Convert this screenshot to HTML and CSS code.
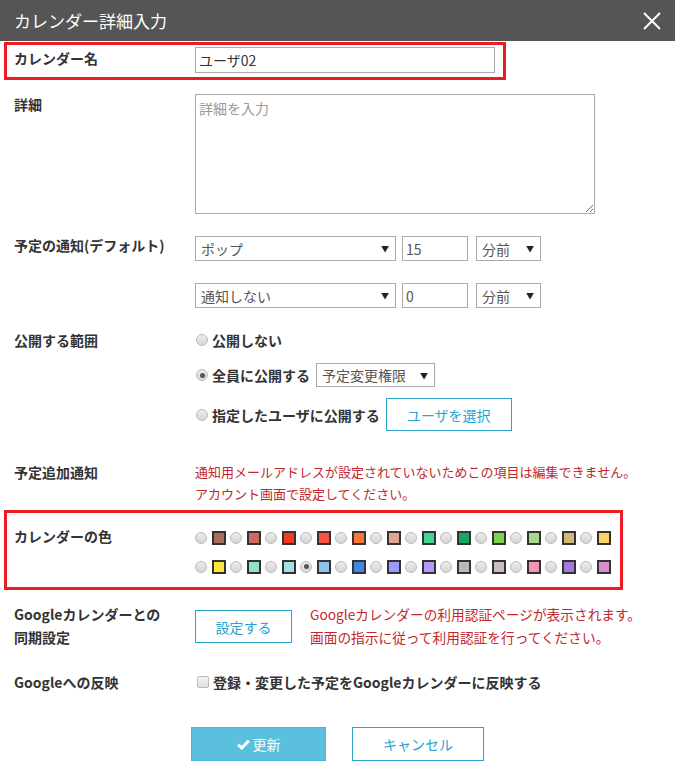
FILE: index.html
```html
<!DOCTYPE html>
<html lang="ja">
<head>
    <meta charset="UTF-8">
    <meta name="viewport" content="width=device-width, initial-scale=1.0">
    <title>カレンダー詳細入力</title>
    <link rel="stylesheet" href="styles.css">
</head>
<body>
    <div class="dialog-header">
        <div class="dialog-title">カレンダー詳細入力</div>
        <span class="close-icon">
            <svg width="18" height="18" viewBox="0 0 18 18"><path d="M1 1 L17 17 M17 1 L1 17" stroke="#fff" stroke-width="2" fill="none"/></svg>
        </span>
    </div>

    <div class="form">
        <div class="row row-hl row-name">
            <div class="label">カレンダー名</div>
            <div class="field"><input type="text" class="text-input name-input" value="ユーザ02"></div>
        </div>

        <div class="row row-detail">
            <div class="label">詳細</div>
            <div class="field"><textarea class="detail-box" placeholder="詳細を入力"></textarea></div>
        </div>

        <div class="row row-notify">
            <div class="label">予定の通知(デフォルト)</div>
            <div class="field">
                <div class="ctrl-line">
                    <div class="select sel-type"><span>ポップ</span><span class="caret">&#9660;</span></div>
                    <input type="text" class="text-input num-input" value="15">
                    <div class="select sel-unit"><span>分前</span><span class="caret">&#9660;</span></div>
                </div>
                <div class="ctrl-line">
                    <div class="select sel-type"><span>通知しない</span><span class="caret">&#9660;</span></div>
                    <input type="text" class="text-input num-input" value="0">
                    <div class="select sel-unit"><span>分前</span><span class="caret">&#9660;</span></div>
                </div>
            </div>
        </div>

        <div class="row row-public">
            <div class="label">公開する範囲</div>
            <div class="field">
                <div class="radio-line line-1">
                    <span class="radio"></span><span class="opt">公開しない</span>
                </div>
                <div class="radio-line line-2">
                    <span class="radio checked"></span><span class="opt">全員に公開する</span>
                    <div class="select sel-perm"><span>予定変更権限</span><span class="caret">&#9660;</span></div>
                </div>
                <div class="radio-line line-3">
                    <span class="radio"></span><span class="opt">指定したユーザに公開する</span>
                    <button class="btn-outline btn-user">ユーザを選択</button>
                </div>
            </div>
        </div>

        <div class="row row-mail">
            <div class="label">予定追加通知</div>
            <div class="field note">通知用メールアドレスが設定されていないためこの項目は編集できません。<br>アカウント画面で設定してください。</div>
        </div>

        <div class="row row-hl row-color">
            <div class="label">カレンダーの色</div>
            <div class="field">
                <div class="swatches" id="swatch-row-1"></div>
                <div class="swatches" id="swatch-row-2"></div>
            </div>
        </div>

        <div class="row row-google">
            <div class="label">Googleカレンダーとの<br>同期設定</div>
            <div class="field google-field">
                <button class="btn-outline btn-setting">設定する</button>
                <div class="note">Googleカレンダーの利用認証ページが表示されます。<br>画面の指示に従って利用認証を行ってください。</div>
            </div>
        </div>

        <div class="row row-reflect">
            <div class="label">Googleへの反映</div>
            <div class="field check-line">
                <span class="checkbox"></span><span class="opt">登録・変更した予定をGoogleカレンダーに反映する</span>
            </div>
        </div>

        <div class="actions">
            <button class="btn-primary">
                <svg width="13" height="11" viewBox="0 0 13 11"><path d="M1.2 5.6 L4.8 9 L11.8 1.8" stroke="#fff" stroke-width="3" fill="none"/></svg>
                更新
            </button>
            <button class="btn-outline btn-cancel">キャンセル</button>
        </div>
    </div>

    <script>
        var rowOne = ['#a86e5a', '#d0685e', '#f53822', '#fc5340', '#fd7531', '#e1a594',
                      '#41d593', '#14a762', '#7ed348', '#a8da8b', '#d1b874', '#fcd462'];
        var rowTwo = ['#fae63c', '#93e3c4', '#a0e0e7', '#88c4ef', '#4385e6', '#999bfe',
                      '#b59afd', '#b9b9b9', '#cabfc0', '#f794b3', '#a578e0', '#d78fcf'];

        function fillSwatches(id, colors, checkedIndex) {
            var row = document.getElementById(id);
            colors.forEach(function (color, i) {
                var item = document.createElement('span');
                item.className = 'swatch';
                var radio = document.createElement('span');
                radio.className = i === checkedIndex ? 'radio checked' : 'radio';
                var box = document.createElement('span');
                box.className = 'color-box';
                box.style.backgroundColor = color;
                item.appendChild(radio);
                item.appendChild(box);
                row.appendChild(item);
            });
        }

        fillSwatches('swatch-row-1', rowOne, -1);
        fillSwatches('swatch-row-2', rowTwo, 3);
    </script>
</body>
</html>
```

FILE: styles.css
```css
body {
    font-family: "Noto Sans CJK JP", "Noto Sans", sans-serif;
    font-size: 14px;
    color: #333;
    margin: 0;
    padding: 0;
    background-color: #fff;
}

.dialog-header {
    background-color: #555555;
    color: #fff;
    height: 41px;
    padding: 0 14px;
    display: flex;
    justify-content: space-between;
    align-items: center;
}

.dialog-title {
    font-size: 17px;
}

.close-icon {
    display: flex;
}

.row {
    display: flex;
    padding-left: 14px;
}

.label {
    width: 181px;
    flex-shrink: 0;
    font-weight: bold;
    line-height: 20px;
}

/* highlighted rows (red frame) */
.row-hl {
    margin-left: 4px;
    padding-left: 7px;
    border: 3px solid #ec1c24;
}

.row-name {
    margin-top: 1px;
    width: 502px;
    box-sizing: border-box;
    padding-top: 2px;
    padding-bottom: 4px;
}

.row-name .label {
    padding-top: 1px;
}

.text-input {
    font-family: inherit;
    font-size: 14px;
    color: #333;
    border: 1px solid #aaa;
    padding: 0 3px;
    box-sizing: border-box;
    outline: none;
}

.name-input {
    width: 300px;
    height: 26px;
}

.row-detail {
    margin-top: 14px;
}

.detail-box {
    display: block;
    width: 400px;
    height: 120px;
    box-sizing: border-box;
    border: 1px solid #aaa;
    padding: 3px 3px;
    font-family: inherit;
    font-size: 14px;
    line-height: 20px;
    color: #333;
}

.detail-box::placeholder {
    color: #999;
}

.row-notify {
    margin-top: 22px;
}

.row-notify .label {
    margin-top: -1px;
}

.ctrl-line {
    display: flex;
    height: 25px;
}

.ctrl-line + .ctrl-line {
    margin-top: 22px;
}

.select {
    display: flex;
    justify-content: space-between;
    align-items: center;
    box-sizing: border-box;
    border: 1px solid #aaa;
    padding: 0 6px 0 5px;
    color: #555;
    background: #fff;
}

.caret {
    font-size: 8px;
    color: #222;
}

.sel-type {
    width: 201px;
}

.num-input {
    width: 66px;
    height: 25px;
    margin-left: 6px;
    color: #555;
}

.sel-unit {
    width: 65px;
    margin-left: 8px;
}

.row-public {
    margin-top: 22px;
}

.radio-line {
    display: flex;
    align-items: center;
}

.line-1 {
    height: 20px;
}

.line-2 {
    height: 24px;
    margin-top: 13px;
}

.line-3 {
    height: 33px;
    margin-top: 11px;
}

.radio {
    display: inline-block;
    width: 12px;
    height: 12px;
    box-sizing: border-box;
    border-radius: 50%;
    border: 1px solid #bbb;
    background: linear-gradient(#ececec, #d6d6d6);
    position: relative;
    flex-shrink: 0;
}

.radio.checked::after {
    content: "";
    position: absolute;
    left: 2.5px;
    top: 2.5px;
    width: 5px;
    height: 5px;
    border-radius: 50%;
    background: #555;
}

.row-public .radio {
    margin-left: 1px;
    margin-right: 4px;
}

.opt {
    font-weight: bold;
}

.sel-perm {
    width: 119px;
    height: 24px;
    margin-left: 6px;
}

.btn-outline {
    font-family: inherit;
    font-size: 14px;
    color: #2a9fd0;
    background: #fff;
    border: 1px solid #2aa3cc;
    cursor: pointer;
    padding: 0;
}

.btn-user {
    width: 126px;
    height: 33px;
    margin-left: 6px;
}

.row-mail {
    margin-top: 30px;
}

.row-mail .label {
    line-height: 22px;
}

.note {
    color: #c1272d;
    font-size: 13px;
    line-height: 22px;
}

.row-color {
    margin-top: 5px;
    width: 619px;
    box-sizing: border-box;
    padding-top: 10px;
    padding-bottom: 6px;
}

.row-color .label {
    padding-top: 3px;
}

.swatches {
    display: flex;
    height: 29px;
    align-items: center;
}

.swatch {
    display: flex;
    align-items: center;
}

.swatch .radio {
    margin-right: 5px;
}

.color-box {
    display: inline-block;
    width: 14px;
    height: 14px;
    box-sizing: border-box;
    border: 2px solid #333;
    margin-right: 4px;
}

.row-google {
    margin-top: 13px;
}

.row-google .label {
    line-height: 23px;
}

.google-field {
    display: flex;
}

.btn-setting {
    width: 97px;
    height: 33px;
    margin-top: 7px;
    margin-right: 18px;
}

.row-google .note {
    font-size: 13.7px;
    line-height: 23px;
}

.row-reflect {
    margin-top: 23px;
}

.check-line {
    display: flex;
    align-items: center;
    height: 20px;
}

.checkbox {
    display: inline-block;
    width: 12px;
    height: 12px;
    box-sizing: border-box;
    border: 1px solid #bbb;
    border-radius: 2px;
    background: linear-gradient(#f4f4f4, #dedede);
    margin-left: 2px;
    margin-right: 4px;
}

.actions {
    display: flex;
    justify-content: center;
    gap: 26px;
    margin-top: 35px;
}

.btn-primary {
    width: 135px;
    height: 34px;
    font-family: inherit;
    font-size: 14px;
    color: #fff;
    background-color: #5bc0de;
    border: 1px solid #46b8da;
    display: flex;
    justify-content: center;
    align-items: center;
    gap: 3px;
    cursor: pointer;
}

.btn-cancel {
    width: 132px;
    height: 34px;
}
```
